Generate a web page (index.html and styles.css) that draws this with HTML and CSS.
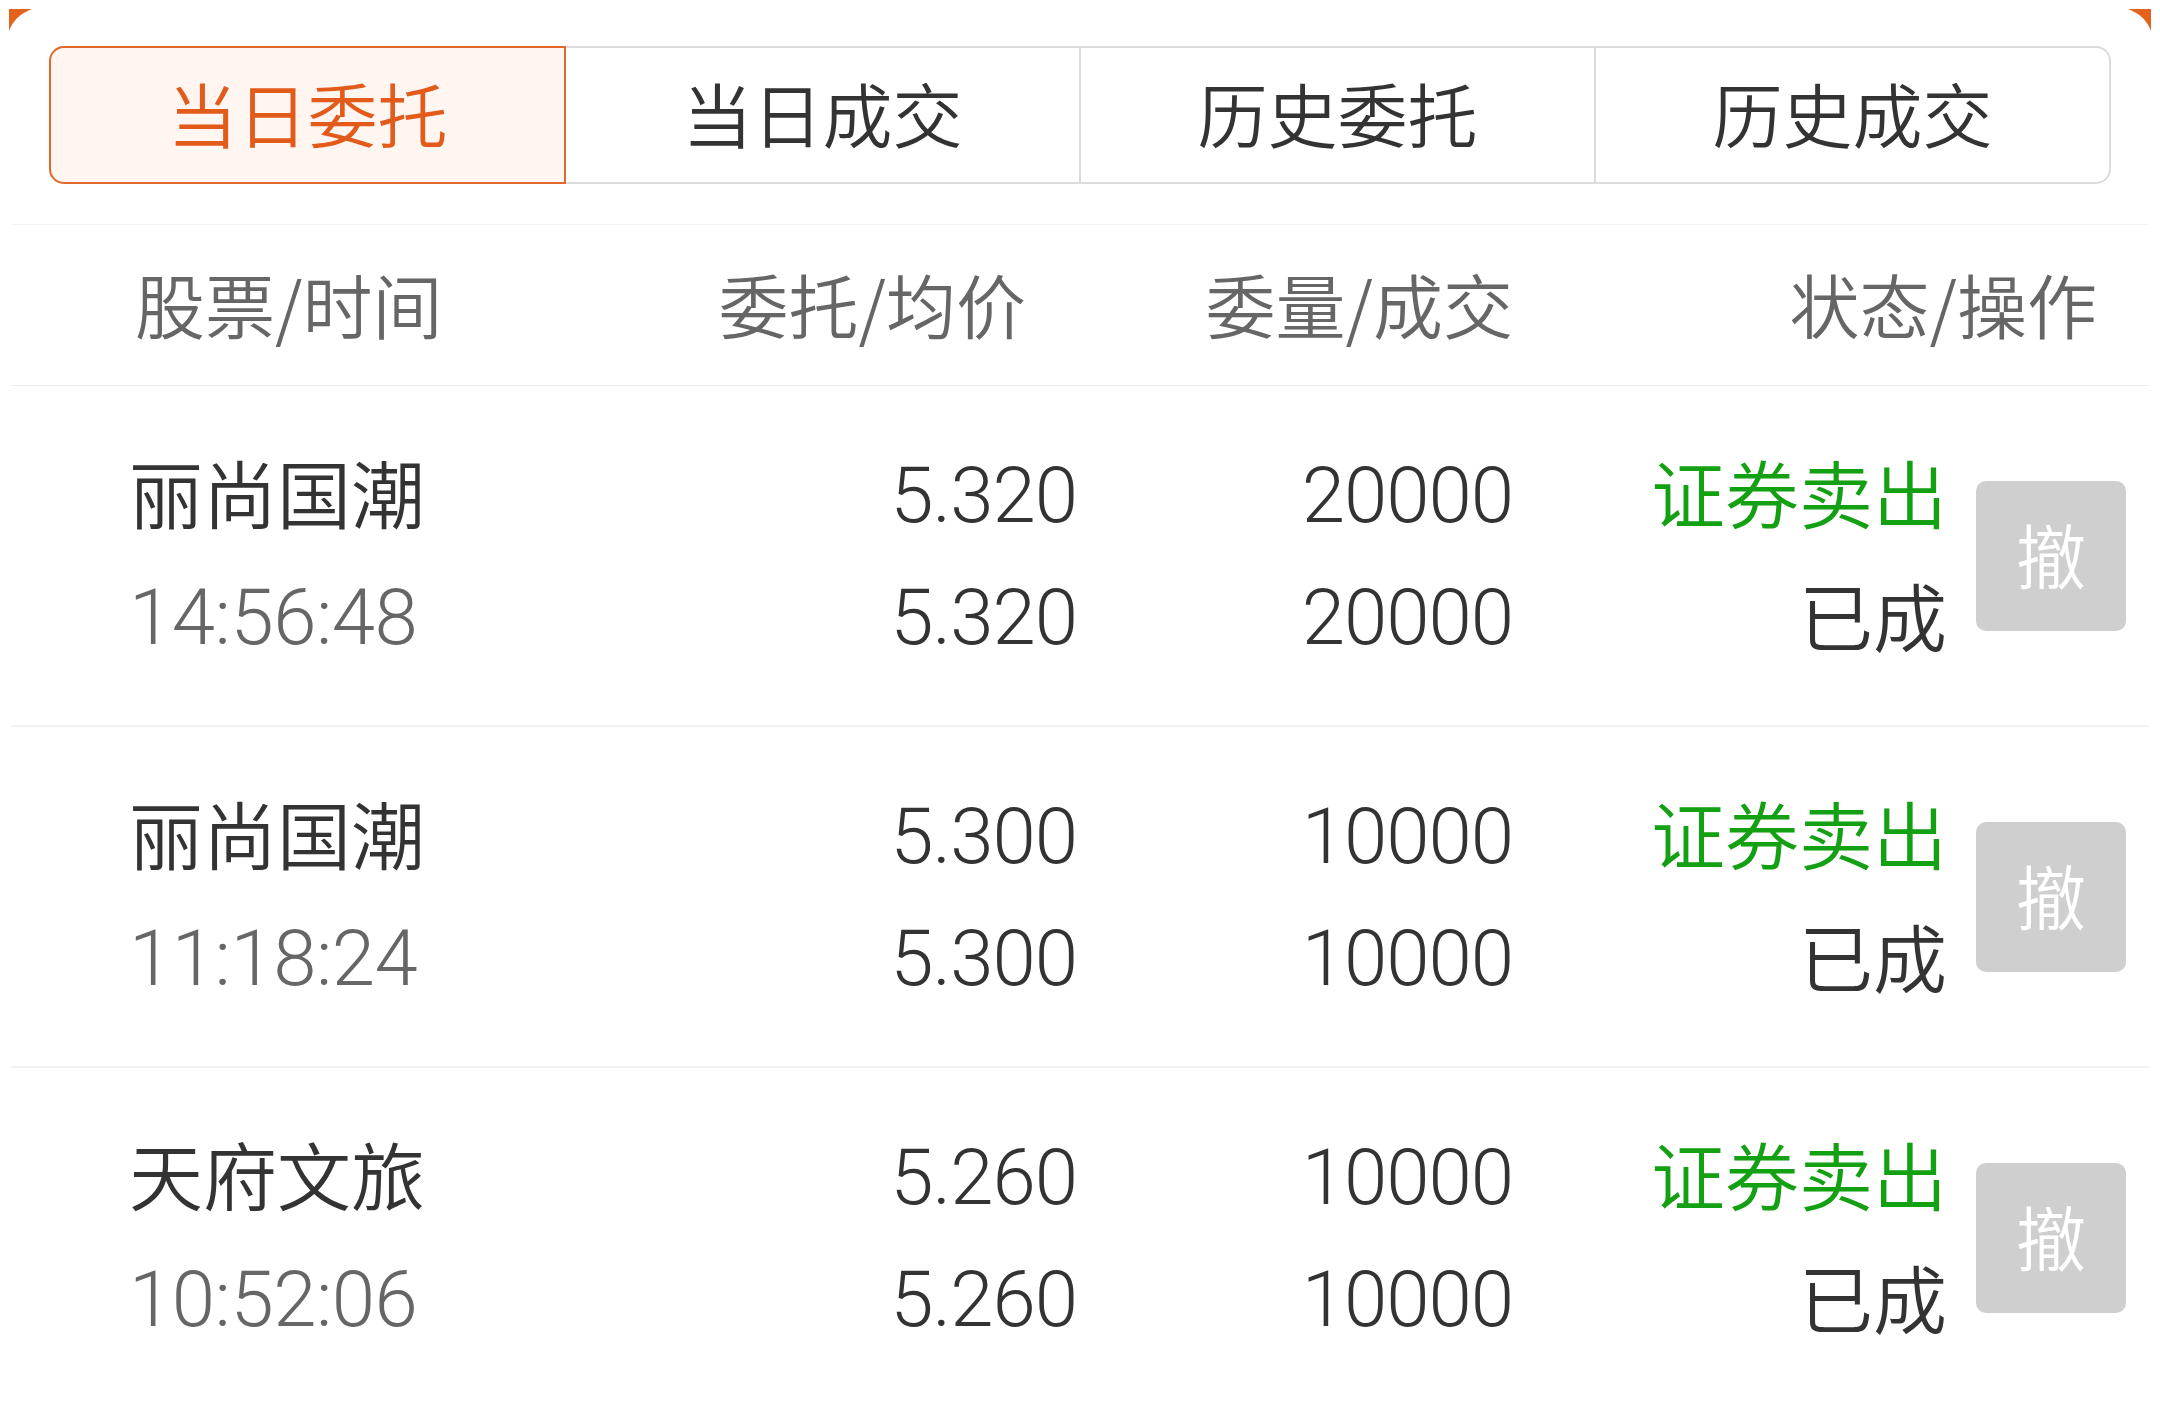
FILE: index.html
```html
<!DOCTYPE html>
<html lang="zh-CN">
<head>
<meta charset="utf-8">
<title>当日委托</title>
<link rel="stylesheet" href="styles.css">
</head>
<body>
<div class="page">
  <div class="corners">
    <svg class="corner" width="23" height="22" viewBox="0 0 23 22"><path d="M0 0 H23 Q6 6 0 22 Z" fill="#e4621c"/></svg>
    <svg class="corner" width="23" height="22" viewBox="0 0 23 22"><path d="M0 0 H23 V22 Q17 6 0 0 Z" fill="#e4621c"/></svg>
  </div>

  <div class="tabs">
    <div class="tab active">当日委托</div>
    <div class="tab">当日成交</div>
    <div class="tab divided">历史委托</div>
    <div class="tab divided">历史成交</div>
  </div>

  <div class="thead">
    <div class="th th-1">股票/时间</div>
    <div class="th th-2">委托/均价</div>
    <div class="th th-3">委量/成交</div>
    <div class="th th-4">状态/操作</div>
  </div>

  <div class="row">
    <div class="name">丽尚国潮</div>
    <div class="num">5.320</div>
    <div class="num">20000</div>
    <div class="status">证券卖出</div>
    <div class="btn-cell"><div class="cancel">撤</div></div>
    <div class="time">14:56:48</div>
    <div class="num">5.320</div>
    <div class="num">20000</div>
    <div class="state">已成</div>
  </div>

  <div class="row">
    <div class="name">丽尚国潮</div>
    <div class="num">5.300</div>
    <div class="num">10000</div>
    <div class="status">证券卖出</div>
    <div class="btn-cell"><div class="cancel">撤</div></div>
    <div class="time">11:18:24</div>
    <div class="num">5.300</div>
    <div class="num">10000</div>
    <div class="state">已成</div>
  </div>

  <div class="row last">
    <div class="name">天府文旅</div>
    <div class="num">5.260</div>
    <div class="num">10000</div>
    <div class="status">证券卖出</div>
    <div class="btn-cell"><div class="cancel">撤</div></div>
    <div class="time">10:52:06</div>
    <div class="num">5.260</div>
    <div class="num">10000</div>
    <div class="state">已成</div>
  </div>
</div>
</body>
</html>
```

FILE: styles.css
```css
* {
  box-sizing: border-box;
}

html, body {
  margin: 0;
  padding: 0;
  background: #ffffff;
}

body {
  width: 2160px;
  height: 1420px;
  overflow: hidden;
  font-family: Roboto, "Noto Sans CJK SC", sans-serif;
  color: #333333;
}

.page {
  padding: 0 11px;
}

.corners {
  height: 46px;
  display: flex;
  justify-content: space-between;
  align-items: flex-start;
  padding: 9px 0 0 0;
  margin: 0 -2px;
}

.corner {
  display: block;
}

/* Tabs */
.tabs {
  margin: 0 38px;
  height: 138px;
  display: flex;
  border: 2px solid #dcdcdc;
  border-radius: 15px;
}

.tab {
  flex: 1;
  display: flex;
  align-items: center;
  justify-content: center;
  font-family: "Noto Sans CJK SC", sans-serif;
  font-weight: 350;
  font-size: 70px;
  color: #333333;
  padding-bottom: 5px;
}

.tab.divided {
  border-left: 2px solid #dcdcdc;
}

.tab.active {
  margin: -2px 0 -2px -2px;
  border: 2px solid #e2682c;
  border-radius: 15px 0 0 15px;
  background: #fff6f2;
  color: #e35b1a;
}

/* Table header */
.thead {
  margin-top: 40px;
  height: 162px;
  border-top: 1px solid #f4f4f4;
  border-bottom: 1px solid #ececec;
  display: grid;
  grid-template-columns: 571px 377px 436px 434px 179px;
  padding: 0 23px 0 118px;
  align-items: center;
  font-family: "Noto Sans CJK SC", sans-serif;
  font-weight: 350;
  font-size: 70px;
  color: #666666;
}

.th {
  white-space: nowrap;
  padding-bottom: 4px;
}

.th-1 {
  padding-left: 6px;
}

.th-2 {
  text-align: right;
  padding-right: 51px;
}

.th-3 {
  text-align: right;
}

.th-4 {
  grid-column: span 2;
  text-align: right;
  padding-right: 29px;
}

/* Rows */
.row {
  display: grid;
  grid-template-columns: 571px 377px 436px 434px 179px;
  grid-template-rows: 122px 122px;
  padding: 48px 23px 47px 118px;
  border-bottom: 2px solid #f1f1f1;
  align-items: center;
  font-size: 74px;
}

.row.last {
  border-bottom: none;
}

.name {
  font-family: "Noto Sans CJK SC", sans-serif;
  font-weight: 350;
  font-size: 74px;
  color: #333333;
  white-space: nowrap;
  padding-bottom: 10px;
}

.time {
  font-family: Roboto, sans-serif;
  font-weight: 300;
  font-size: 78px;
  letter-spacing: -0.5px;
  color: #666666;
}

.num {
  font-family: Roboto, sans-serif;
  font-weight: 300;
  font-size: 78px;
  letter-spacing: -1px;
  color: #333333;
  text-align: right;
}

.status {
  font-family: "Noto Sans CJK SC", sans-serif;
  font-weight: 350;
  font-size: 74px;
  color: #13a013;
  text-align: right;
  white-space: nowrap;
  padding-bottom: 10px;
}

.state {
  font-family: "Noto Sans CJK SC", sans-serif;
  font-weight: 350;
  font-size: 74px;
  color: #333333;
  text-align: right;
  padding-bottom: 8px;
}

.btn-cell {
  grid-row: span 2;
  display: flex;
  justify-content: flex-end;
  align-items: center;
  height: 100%;
}

.cancel {
  width: 150px;
  height: 150px;
  border-radius: 10px;
  background: #cfcfcf;
  color: #ffffff;
  font-family: "Noto Sans CJK SC", sans-serif;
  font-weight: 350;
  font-size: 70px;
  display: flex;
  align-items: center;
  justify-content: center;
  padding-bottom: 6px;
}
```
